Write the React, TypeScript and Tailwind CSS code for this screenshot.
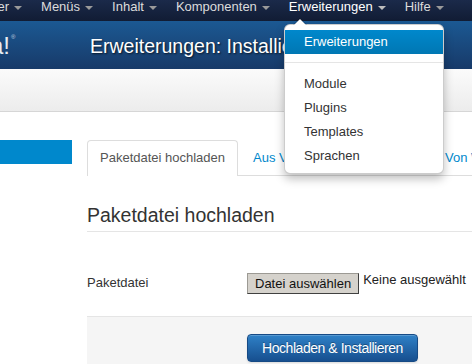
import React from "react";

function Caret({ color = "border-t-[#9a9a9a]" }: { color?: string }) {
  return (
    <span
      className={`ml-[5px] mt-[6px] inline-block h-0 w-0 self-start border-x-[4px] border-t-[4px] border-x-transparent ${color}`}
    />
  );
}

function NavItem({ label, active = false }: { label: string; active?: boolean }) {
  return (
    <div className="flex shrink-0 items-start whitespace-nowrap">
      <span className={active ? "text-white" : "text-[#dcdcdc]"}>{label}</span>
      <Caret color={active ? "border-t-[#bdbdbd]" : "border-t-[#9a9a9a]"} />
    </div>
  );
}

export default function App() {
  return (
    <div className="relative h-[364px] w-[472px] overflow-hidden bg-white font-['Liberation_Sans',Arial,sans-serif] text-[13px] text-[#333]">
      {/* top navbar */}
      <div className="h-[21px] bg-gradient-to-b from-[#1b2a4a] to-[#111c34]">
        <div className="-ml-[43px] flex gap-[19px] leading-[14px]">
          <NavItem label="Benutzer" />
          <NavItem label="Menüs" />
          <NavItem label="Inhalt" />
          <NavItem label="Komponenten" />
          <NavItem label="Erweiterungen" active />
          <NavItem label="Hilfe" />
        </div>
      </div>

      {/* header */}
      <div className="flex h-[48px] items-start bg-gradient-to-b from-[#1b5993] to-[#173a69] pt-[12px]">
        <div className="-ml-[74px] flex w-[164px] shrink-0 items-baseline whitespace-nowrap">
          <span className="text-[24px] leading-[26px] text-[#e8ecf2]">Joomla!</span>
          <span className="ml-[1px] self-start text-[6px] leading-[8px] text-[#c8d2e0]">®</span>
        </div>
        <h1 className="whitespace-nowrap text-[19.5px] leading-[26px] text-white [text-shadow:1px_1px_2px_rgba(0,0,0,0.7)]">
          Erweiterungen: Installieren
        </h1>
      </div>

      {/* subhead */}
      <div className="h-[43px] border-b border-[#d6d6d6] bg-gradient-to-b from-[#fbfbfb] to-[#ececec]" />

      {/* body */}
      <div className="flex pt-[28px]">
        <div className="w-[72px] shrink-0">
          <div className="h-[24px] bg-[#0088cc]" />
        </div>
        <div className="ml-[15px] min-w-0 flex-1">
          {/* tabs */}
          <ul className="flex border-b border-[#dddddd]">
            <li className="-mb-px mr-[2px] shrink-0 whitespace-nowrap rounded-t-[4px] border border-b-0 border-[#dddddd] bg-white px-[12px] py-[8px] leading-[18px] text-[#555]">
              Paketdatei hochladen
            </li>
            <li className="-mb-px mr-[2px] w-[190px] shrink-0 whitespace-nowrap border border-transparent px-[12px] py-[8px] leading-[18px] text-[#0088cc]">
              Aus Verzeichnis installieren
            </li>
            <li className="-mb-px shrink-0 whitespace-nowrap border border-transparent px-[12px] py-[8px] leading-[18px] text-[#0088cc]">
              Von Webadresse (URL) installieren
            </li>
          </ul>

          {/* legend */}
          <h2 className="mt-[27px] border-b border-[#e5e5e5] pb-[4px] text-[19.5px] leading-[24px] text-[#333]">
            Paketdatei hochladen
          </h2>

          {/* file row */}
          <div className="mt-[41px] flex items-start">
            <div className="w-[160px] shrink-0 leading-[20px] text-[#333]">Paketdatei</div>
            <div className="flex items-start whitespace-nowrap">
              <button className="h-[21px] border border-[#9c9a94] border-b-[#404040] border-r-[#404040] bg-[#d5d2cc] px-[7px] leading-[18px] text-[#111]">
                Datei auswählen
              </button>
              <span className="-mt-[2px] ml-[4px] leading-[18px] text-[#222]">Keine ausgewählt</span>
            </div>
          </div>

          {/* form actions */}
          <div className="mt-[22px] h-[60px] border-t border-[#e5e5e5] bg-[#f5f5f5] pl-[160px] pt-[17px]">
            <button className="h-[28px] whitespace-nowrap rounded-[4px] border border-[#164a85] bg-gradient-to-b from-[#2f81c7] to-[#174f8f] px-[14px] text-[14px] leading-[26px] tracking-[-0.45px] text-white shadow-[inset_0_1px_0_rgba(255,255,255,0.2),0_1px_2px_rgba(0,0,0,0.1)] [text-shadow:0_-1px_0_rgba(0,0,0,0.3)]">
              Hochladen &amp; Installieren
            </button>
          </div>
        </div>
      </div>

      {/* dropdown menu */}
      <div className="absolute left-[284px] top-[24px] w-[160px] rounded-[6px] border border-[rgba(0,0,0,0.2)] bg-white py-[5px] shadow-[0_5px_10px_rgba(0,0,0,0.25)]">
        <span className="absolute -top-[7px] left-[8px] h-0 w-0 border-x-[7px] border-b-[7px] border-x-transparent border-b-[rgba(0,0,0,0.2)]" />
        <span className="absolute -top-[6px] left-[9px] h-0 w-0 border-x-[6px] border-b-[6px] border-x-transparent border-b-white" />
        <div className="h-[24px] bg-gradient-to-b from-[#0088cc] to-[#0077b3] px-[19px] leading-[24px] text-white">
          Erweiterungen
        </div>
        <div className="mb-[8px] mt-[8px] h-px border-b border-white bg-[#e5e5e5] box-content" />
        <div className="h-[24px] px-[19px] leading-[24px] text-[#333]">Module</div>
        <div className="h-[24px] px-[19px] leading-[24px] text-[#333]">Plugins</div>
        <div className="h-[24px] px-[19px] leading-[24px] text-[#333]">Templates</div>
        <div className="h-[24px] px-[19px] leading-[24px] text-[#333]">Sprachen</div>
      </div>
    </div>
  );
}
